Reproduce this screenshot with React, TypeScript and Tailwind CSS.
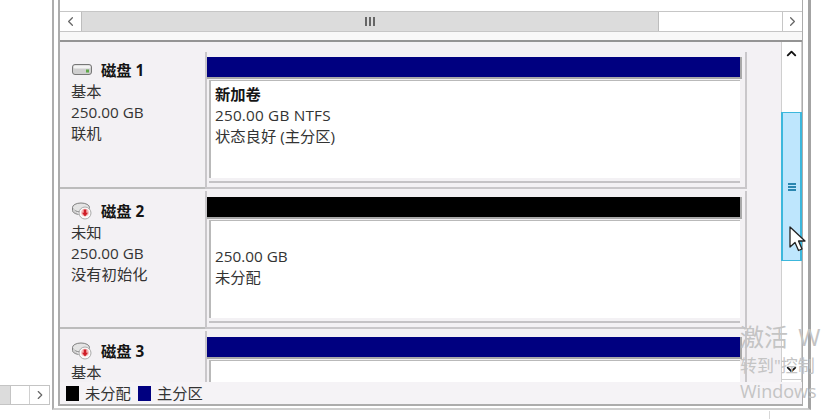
import { ChevronDown, ChevronLeft, ChevronRight, ChevronUp } from "lucide-react";

const font = { fontFamily: '"Open Sans", "Noto Sans CJK SC", sans-serif' };

function DiskIcon({ bad }: { bad?: boolean }) {
  if (!bad) {
    return (
      <svg width="22" height="18" viewBox="0 0 22 18" className="shrink-0">
        <rect x="1.5" y="3.5" width="19" height="10" rx="2.5" fill="#cfcfcf" stroke="#777" />
        <rect x="2.5" y="4.5" width="17" height="3" rx="1.5" fill="#f3f3f3" />
        <rect x="15" y="8.5" width="3" height="3" fill="#5fa84a" />
      </svg>
    );
  }
  return (
    <svg width="22" height="18" viewBox="0 0 22 18" className="shrink-0">
      <ellipse cx="10" cy="5.5" rx="8.5" ry="4.5" fill="#e4e4e4" stroke="#808080" />
      <path d="M1.5 5.5v3c0 2 3 3.5 6 4" fill="#cfcfcf" stroke="#808080" />
      <circle cx="14" cy="11" r="6" fill="#fafafa" stroke="#aaa" />
      <circle cx="14" cy="10.5" r="3.8" fill="#f3b7b7" />
      <path d="M12.7 7.5h2.6v3.2H17L14 14.6l-3-3.9h1.7z" fill="#cf1d27" />
    </svg>
  );
}

function DiskLabel({
  name,
  lines,
  bad,
  top,
}: {
  name: string;
  lines: string[];
  bad?: boolean;
  top: string;
}) {
  return (
    <div className={`w-[145px] shrink-0 ${top} pl-[11px] text-[15.3px] leading-[21px] text-[#333]`}>
      <div className="flex items-center gap-[8px] h-[22px]">
        <DiskIcon bad={bad} />
        <span className="font-bold text-[#151515]">{name}</span>
      </div>
      {lines.map((l) => (
        <div key={l}>{l}</div>
      ))}
    </div>
  );
}

function Partition({
  bar,
  frame,
  children,
}: {
  bar: string;
  frame: string;
  children?: React.ReactNode;
}) {
  return (
    <div className={`w-[542px] shrink-0 ${frame} border-l-2 border-r-2 border-[#c9c7ca] pr-[3px]`}>
      <div className={`h-[22px] ${bar} border-r-2 border-b-2 border-[#a9a9a9]`} />
      <div className="mt-px ml-[2px] mr-[2px] h-[103px] border-b-2 border-[#c4c2c5] pb-[3px]">
        <div className="h-full bg-white border-l-2 border-t border-[#b9b9b9] pl-[4px] pt-[3px] text-[15.3px] leading-[21px] text-[#333]">
          {children}
        </div>
      </div>
    </div>
  );
}

export default function App() {
  return (
    <div className="relative w-[822px] h-[419px] overflow-hidden bg-white flex" style={font}>
      {/* left pane stub */}
      <div className="w-[52px] shrink-0 pr-[2px] flex flex-col pt-[385px]">
        <div className="h-[20px] flex border-y border-[#c4c4c4] border-r">
          <div className="w-[11px] bg-[#dcdcdc] border-r border-[#c4c4c4]" />
          <div className="flex-1 bg-white border-r border-[#d0d0d0]" />
          <div className="w-[19px] flex items-center justify-center">
            <ChevronRight size={14} className="text-[#666]" />
          </div>
        </div>
      </div>

      {/* main window frame */}
      <div className="w-[759px] shrink-0 h-[410px] border-l-2 border-r-[3px] border-b-2 border-l-[#adadad] border-r-[#a3a3a3] border-b-[#cfcfcf] pl-[4px] pr-[5px] pb-[2px]">
        <div className="h-full flex flex-col border-l-2 border-r border-b-2 border-[#acacac]">
          <div className="h-[11px] shrink-0 bg-white" />
          {/* horizontal scrollbar */}
          <div className="h-[21px] shrink-0 flex border-y border-[#c6c6c6] bg-white">
            <div className="w-[21px] flex items-center justify-center">
              <ChevronLeft size={15} className="text-[#666]" />
            </div>
            <div className="w-[578px] bg-[#dcdcdc] border-x border-[#bdbdbd] flex items-center justify-center">
              <span className="flex gap-[1.5px]">
                <i className="w-[2.5px] h-[9px] bg-[#666]" />
                <i className="w-[2.5px] h-[9px] bg-[#666]" />
                <i className="w-[2.5px] h-[9px] bg-[#666]" />
              </span>
            </div>
            <div className="flex-1" />
            <div className="w-[20px] flex items-center justify-center border-l border-[#c6c6c6]">
              <ChevronRight size={15} className="text-[#666]" />
            </div>
          </div>
          <div className="h-[10px] shrink-0 bg-[#f8f8f8] border-b-2 border-[#949494]" />

          {/* disks + vertical scrollbar */}
          <div className="flex-1 flex min-h-0 bg-[#f3f1f4]">
            <div className="flex-1 min-w-0 flex flex-col overflow-hidden">
              <div className="h-[147px] shrink-0 flex items-start">
                <div className="h-full border-b-2 border-[#bcbcbc]">
                  <DiskLabel name="磁盘 1" lines={["基本", "250.00 GB", "联机"]} top="pt-[17px]" />
                </div>
                <Partition bar="bg-[#000080]" frame="mt-[10px] h-[137px] pt-[5px] border-b-2">
                  <div className="font-bold text-[#151515]">新加卷</div>
                  <div className="tracking-[0.2px]">250.00 GB NTFS</div>
                  <div>状态良好 (主分区)</div>
                </Partition>
              </div>
              <div className="h-[140px] shrink-0 flex items-start">
                <div className="h-full border-b-2 border-[#bcbcbc]">
                  <DiskLabel name="磁盘 2" lines={["未知", "250.00 GB", "没有初始化"]} bad top="pt-[11px]" />
                </div>
                <Partition bar="bg-black" frame="mt-[2px] h-[138px] pt-[6px] border-b-2">
                  <div className="pt-[22px]">250.00 GB</div>
                  <div>未分配</div>
                </Partition>
              </div>
              <div className="flex-1 flex items-start min-h-0">
                <DiskLabel name="磁盘 3" lines={["基本"]} bad top="pt-[11px]" />
                <Partition bar="bg-[#000080]" frame="mt-[2px] h-[138px] pt-[6px]" />
              </div>
            </div>
            <div className="w-[21px] shrink-0 flex flex-col bg-white border-x border-[#cfcfcf]">
              <div className="h-[20px] mt-px flex items-center justify-center bg-white">
                <ChevronUp size={15} strokeWidth={3} className="text-[#111]" />
              </div>
              <div className="h-[49px]" />
              <div className="h-[149px] -mx-px bg-[#bee6fd] border-2 border-y border-[#3cb7dc] flex items-center justify-center">
                <span className="flex flex-col gap-px">
                  <i className="w-[8px] h-[2px] bg-[#2a86b0]" />
                  <i className="w-[8px] h-[2px] bg-[#2a86b0]" />
                  <i className="w-[8px] h-[2px] bg-[#2a86b0]" />
                </span>
              </div>
              <div className="flex-1" />
              <div className="h-[20px] mb-[2px] flex items-center justify-center border-b border-[#cfcfcf]">
                <ChevronDown size={15} strokeWidth={3} className="text-[#111]" />
              </div>
            </div>
          </div>

          {/* legend */}
          <div className="h-[22px] shrink-0 flex items-center pl-[6px] bg-[#f5f3f6] text-[15.3px] text-[#333]">
            <i className="w-[13px] h-[15px] bg-black mr-[6px]" />
            <span className="mr-[7px]">未分配</span>
            <i className="w-[13px] h-[15px] bg-[#000080] mr-[6px]" />
            <span>主分区</span>
          </div>
        </div>
      </div>

      {/* bottom edge tick */}
      <div className="absolute left-[769px] top-[411px] w-px h-[8px] bg-[#d8d8d8]" />

      {/* activation watermark */}
      <div className="absolute left-[740px] top-[322px] whitespace-nowrap text-[#c4c4c4] pointer-events-none">
        <div className="text-[24px] leading-[30px] [word-spacing:4px]">激活 W</div>
        <div className="text-[17px] leading-[26px] mt-px">转到"控制</div>
        <div className="text-[18px] leading-[24px]">Windows</div>
      </div>

      {/* mouse cursor */}
      <svg width="18" height="28" viewBox="0 0 18 28" className="absolute left-[789px] top-[226px]">
        <path d="M1 1v20l5-4.5 3.5 8 3.5-1.5-3.5-8H16z" fill="#fff" stroke="#222" strokeWidth="1.3" strokeLinejoin="round" />
      </svg>
    </div>
  );
}
